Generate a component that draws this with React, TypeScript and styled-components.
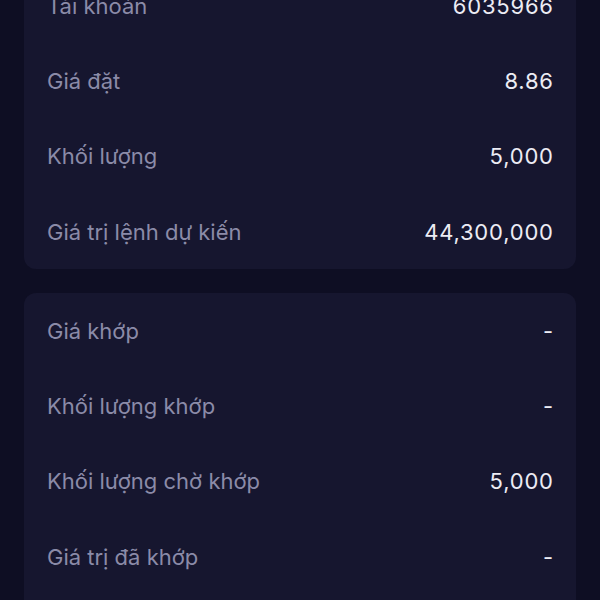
import React from "react";
import styled, { createGlobalStyle } from "styled-components";

const GlobalStyle = createGlobalStyle`
  html, body {
    margin: 0;
    padding: 0;
    background: #0e0e23;
  }
  body {
    font-family: Inter, "Noto Sans", "Liberation Sans", sans-serif;
    -webkit-font-smoothing: antialiased;
  }
`;

type Row = { label: string; value: string };

const orderInfo: Row[] = [
  { label: "Tài khoản", value: "6035966" },
  { label: "Giá đặt", value: "8.86" },
  { label: "Khối lượng", value: "5,000" },
  { label: "Giá trị lệnh dự kiến", value: "44,300,000" },
];

const matchInfo: Row[] = [
  { label: "Giá khớp", value: "-" },
  { label: "Khối lượng khớp", value: "-" },
  { label: "Khối lượng chờ khớp", value: "5,000" },
  { label: "Giá trị đã khớp", value: "-" },
  { label: "Giá trị chờ khớp", value: "44,300,000" },
];

function App() {
  return (
    <>
      <GlobalStyle />
      <Page>
        <Card>
          {orderInfo.map((r) => (
            <InfoRow key={r.label}>
              <Label>{r.label}</Label>
              <Value>{r.value}</Value>
            </InfoRow>
          ))}
        </Card>
        <Card>
          {matchInfo.map((r) => (
            <InfoRow key={r.label}>
              <Label>{r.label}</Label>
              <Value>{r.value}</Value>
            </InfoRow>
          ))}
        </Card>
      </Page>
    </>
  );
}

const Page = styled.div`
  display: flex;
  flex-direction: column;
  gap: 24px;
  padding: 0 24px;
  margin-top: -32px;
  height: 632px;
  overflow: hidden;
`;

const Card = styled.div`
  display: flex;
  flex-direction: column;
  background: #16162f;
  border-radius: 12px;
  padding: 0 23px;
  flex-shrink: 0;
`;

const InfoRow = styled.div`
  display: flex;
  align-items: center;
  justify-content: space-between;
  height: 75.3px;
`;

const Label = styled.span`
  font-size: 22px;
  color: #8b8ba8;
`;

const Value = styled.span`
  font-size: 22px;
  letter-spacing: 0.8px;
  margin-right: -0.8px;
  color: #ececf4;
`;

export default App;
